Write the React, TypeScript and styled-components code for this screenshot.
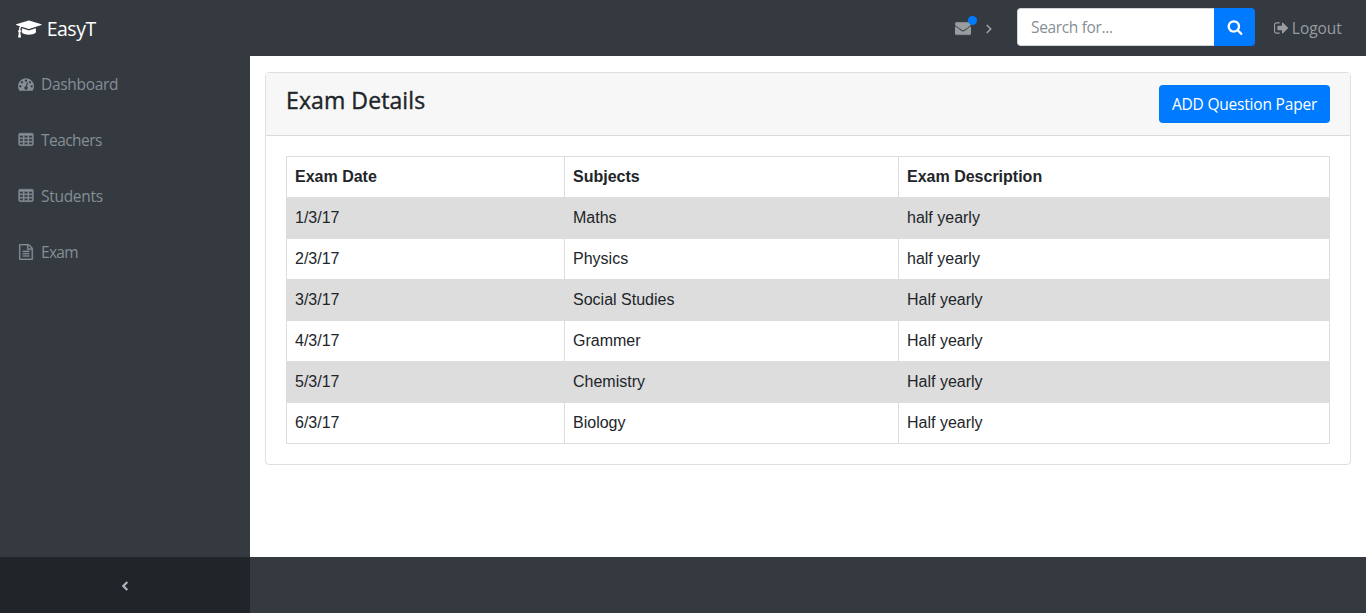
import React from "react";
import styled, { createGlobalStyle } from "styled-components";

const GlobalStyle = createGlobalStyle`
  *, *::before, *::after { box-sizing: border-box; }
  body {
    margin: 0;
    font-family: "Open Sans", "Noto Sans", sans-serif;
    font-size: 15.5px;
    line-height: 24px;
    color: #212529;
    background: #343a40;
  }
`;

const Page = styled.div`
  display: grid;
  grid-template-columns: 250px 1fr;
  grid-template-rows: 56px 1fr;
  height: 100vh;
  overflow: hidden;
`;

const Navbar = styled.header`
  grid-column: 1 / -1;
  display: flex;
  align-items: center;
  padding: 0 24px 0 16px;
  background: #343a40;
`;

const Label = styled.span<{ $size?: number; $spacing?: number }>`
  display: block;
  font-size: ${(p) => p.$size ?? 15.5}px;
  letter-spacing: ${(p) => p.$spacing ?? -0.3}px;
  white-space: nowrap;
`;

const Brand = styled.a`
  display: flex;
  align-items: center;
  gap: 5px;
  margin-right: auto;
  padding-top: 2px;
  color: #fff;
`;

const Messages = styled.a`
  display: flex;
  align-items: center;
  position: relative;
  width: 39px;
  margin: 0 23px 0 0;
  color: #9a9da0;
`;

const UnreadDot = styled.span`
  position: absolute;
  left: 13px;
  top: -4px;
  width: 9px;
  height: 9px;
  border-radius: 50%;
  background: #007bff;
`;

const Caret = styled.span`
  display: flex;
  margin: 1px 0 0 14px;
`;

const SearchGroup = styled.form`
  display: flex;
  width: 238px;
  height: 38px;
  margin: -2px 18px 0 0;
`;

const SearchInput = styled.input`
  flex: 1;
  min-width: 0;
  padding: 0 12px 0 13px;
  border: 1px solid #ced4da;
  border-right: 0;
  border-radius: 4px 0 0 4px;
  font: inherit;
  letter-spacing: -0.35px;
  background: #fff;
  outline: 0;
  &::placeholder { color: #868e96; opacity: 1; }
`;

const SearchButton = styled.button`
  display: flex;
  align-items: center;
  justify-content: center;
  width: 41px;
  padding: 0;
  border: 0;
  border-radius: 0 4px 4px 0;
  color: #fff;
  background: #007bff;
`;

const Logout = styled.a`
  display: flex;
  align-items: center;
  gap: 3px;
  width: 69px;
  padding-left: 1px;
  color: #9a9da0;
`;

const Sidebar = styled.nav`
  display: flex;
  flex-direction: column;
  background: #343a40;
`;

const NavItem = styled.a`
  display: flex;
  align-items: center;
  gap: 5px;
  height: 56px;
  padding: 0 16px;
  color: #868e96;
`;

const IconSlot = styled.span`
  display: flex;
  justify-content: center;
  width: 20px;
`;

const SidebarToggle = styled.button`
  display: flex;
  align-items: center;
  justify-content: center;
  height: 56px;
  margin-top: auto;
  padding: 2px 0 0;
  border: 0;
  color: #adb5bd;
  background: #212529;
`;

const Content = styled.div`
  display: flex;
  flex-direction: column;
  background: #fff;
`;

const Main = styled.main`
  flex: 1;
  padding: 16px 15px 0;
`;

const Footer = styled.footer`
  height: 56px;
  background: #343a40;
`;

const Card = styled.section`
  border: 1px solid #dfdfdf;
  border-radius: 4px;
`;

const CardHeader = styled.div`
  display: flex;
  justify-content: space-between;
  align-items: flex-start;
  padding: 12px 20px;
  border-bottom: 1px solid #dadada;
  border-radius: 3px 3px 0 0;
  background: #f7f7f7;
`;

const CardTitle = styled.h4`
  margin: 0;
  font-size: 23px;
  font-weight: 500;
  line-height: 31px;
  letter-spacing: 0.1px;
  -webkit-text-stroke: 0.4px currentColor;
`;

const AddButton = styled.button`
  display: flex;
  align-items: center;
  justify-content: center;
  width: 171px;
  height: 38px;
  padding: 0;
  border: 0;
  border-radius: 4px;
  font: inherit;
  color: #fff;
  background: #007bff;
`;

const CardBody = styled.div`
  padding: 20px;
`;

const Table = styled.table`
  width: 100%;
  table-layout: fixed;
  border-collapse: collapse;
  font: 16px/24px "Liberation Sans", Arial, sans-serif;
  border: 1px solid #ddd;
`;

const Cell = styled.td`
  height: 41px;
  padding: 8px;
  border-left: 1px solid #ddd;
  border-bottom: 1px solid #ddd;
  text-align: left;
`;

const Row = styled.tr<{ $striped?: boolean }>`
  background: ${(p) => (p.$striped ? "#ddd" : "#fff")};
`;

type Glyph = { w: number; d: string; bold?: number };

const cell = (x: number, y: number) =>
  `M${x} ${y}v-192q0-14-9-23t-23-9h-320q-14 0-23 9t-9 23v192q0 14 9 23t23 9h320q14 0 23-9t9-23z`;

const glyphs: Record<string, Glyph> = {
  cap: {
    w: 2304,
    d: "M1774 836l18 316q4 69-82 128t-235 93.5-323 34.5-323-34.5-235-93.5-82-128l18-316 574 181q22 7 48 7t48-7zm530-324q0 23-22 31l-1120 352q-4 1-10 1t-10-1l-652-206q-43 34-71 111.5t-34 178.5q63 36 63 109 0 69-58 107l58 433q2 14-8 25-9 11-24 11h-192q-15 0-24-11-10-11-8-25l58-433q-58-38-58-107 0-73 65-111 11-207 98-330l-333-104q-22-8-22-31t22-31l1120-352q4-1 10-1t10 1l1120 352q22 8 22 31z",
  },
  dashboard: {
    w: 1792,
    d: "M384 1152q0-53-37.5-90.5t-90.5-37.5-90.5 37.5-37.5 90.5 37.5 90.5 90.5 37.5 90.5-37.5 37.5-90.5zm192-448q0-53-37.5-90.5t-90.5-37.5-90.5 37.5-37.5 90.5 37.5 90.5 90.5 37.5 90.5-37.5 37.5-90.5zm428 481l101-382q6-26-7.5-48.5t-38.5-29.5-48 6.5-30 39.5l-101 382q-60 5-107 43.5t-63 98.5q-20 77 20 146t117 89 146-20 89-117q16-60-6-117t-72-91zm660-33q0-53-37.5-90.5t-90.5-37.5-90.5 37.5-37.5 90.5 37.5 90.5 90.5 37.5 90.5-37.5 37.5-90.5zm-640-640q0-53-37.5-90.5t-90.5-37.5-90.5 37.5-37.5 90.5 37.5 90.5 90.5 37.5 90.5-37.5 37.5-90.5zm448 192q0-53-37.5-90.5t-90.5-37.5-90.5 37.5-37.5 90.5 37.5 90.5 90.5 37.5 90.5-37.5 37.5-90.5zm320 448q0 261-141 483-19 29-54 29h-1402q-35 0-54-29-141-221-141-483 0-182 71-348t191-286 286-191 348-71 348 71 286 191 191 286 71 348z",
  },
  table: {
    w: 1792,
    bold: 45,
    d:
      [576, 1088, 1600].map((x) => [608, 992, 1376].map((y) => cell(x, y)).join("")).join("") +
      "M1728 288v1088q0 66-47 113t-113 47h-1344q-66 0-113-47t-47-113v-1088q0-66 47-113t113-47h1344q66 0 113 47t47 113z",
  },
  file: {
    w: 1792,
    bold: 30,
    d: "M1596 380q28 28 48 76t20 88v1152q0 40-28 68t-68 28h-1344q-40 0-68-28t-28-68v-1600q0-40 28-68t68-28h896q40 0 88 20t76 48zm-444-244v376h376q-10-29-22-41l-313-313q-12-12-41-22zm384 1528v-1024h-416q-40 0-68-28t-28-68v-416h-768v1536h1280zm-1024-864q0-14 9-23t23-9h704q14 0 23 9t9 23v64q0 14-9 23t-23 9h-704q-14 0-23-9t-9-23v-64zm736 224q14 0 23 9t9 23v64q0 14-9 23t-23 9h-704q-14 0-23-9t-9-23v-64q0-14 9-23t23-9h704zm0 256q14 0 23 9t9 23v64q0 14-9 23t-23 9h-704q-14 0-23-9t-9-23v-64q0-14 9-23t23-9h704z",
  },
  envelope: {
    w: 1792,
    bold: 30,
    d: "M1792 710v794q0 66-47 113t-113 47h-1472q-66 0-113-47t-47-113v-794q44 49 101 87 362 246 497 345 57 42 92.5 65.5t94.5 48 110 24.5h2q51 0 110-24.5t94.5-48 92.5-65.5q170-123 498-345 57-39 100-87zm0-294q0 79-49 151t-122 123q-376 261-468 325-10 7-42.5 31t-54 38.5-52 32.5-57.5 27-50 9h-2q-23 0-50-9t-57.5-27-52-32.5-54-38.5-42.5-31q-91-64-262-182.5t-205-142.5q-62-42-117-115.5t-55-136.5q0-78 41.5-130t118.5-52h1472q65 0 112.5 47t47.5 113z",
  },
  search: {
    w: 1792,
    d: "M1216 832q0-185-131.5-316.5t-316.5-131.5-316.5 131.5-131.5 316.5 131.5 316.5 316.5 131.5 316.5-131.5 131.5-316.5zm512 832q0 52-38 90t-90 38q-54 0-90-38l-343-342q-179 124-399 124-143 0-273.5-55.5t-225-150-150-225-55.5-273.5 55.5-273.5 150-225 225-150 273.5-55.5 273.5 55.5 225 150 150 225 55.5 273.5q0 220-124 399l343 343q37 37 37 90z",
  },
  signOut: {
    w: 1664,
    d: "M640 1440q0 4 1 20t.5 26.5-3 23.5-10 19.5-20.5 6.5h-320q-119 0-203.5-84.5t-84.5-203.5v-704q0-119 84.5-203.5t203.5-84.5h320q13 0 22.5 9.5t9.5 22.5q0 4 1 20t.5 26.5-3 23.5-10 19.5-20.5 6.5h-320q-66 0-113 47t-47 113v704q0 66 47 113t113 47h312l11.5 1 11.5 3 8 5.5 7 9 2 13.5zM1568 896q0 26-19 45l-544 544q-19 19-45 19t-45-19-19-45v-288h-448q-26 0-45-19t-19-45v-384q0-26 19-45t45-19h448v-288q0-26 19-45t45-19 45 19l544 544q19 19 19 45z",
  },
};

function Icon({ name, size = 16 }: { name: string; size?: number }) {
  const g = glyphs[name];
  return (
    <svg width={(g.w * size) / 1792} height={size} viewBox={`0 0 ${g.w} 1792`} fill="currentColor" fillRule="evenodd">
      <path d={g.d} stroke="currentColor" strokeWidth={g.bold ?? 0} />
    </svg>
  );
}

function Angle({ left, weight }: { left?: boolean; weight: number }) {
  return (
    <svg width="8" height="12" viewBox="0 0 8 12" fill="none" stroke="currentColor" strokeWidth={weight}>
      <path d={left ? "M6.3 2L2.3 6l4 4" : "M1.7 2l4 4-4 4"} />
    </svg>
  );
}

const links = [
  { icon: "dashboard", label: "Dashboard", spacing: -0.3 },
  { icon: "table", label: "Teachers", spacing: -0.55 },
  { icon: "table", label: "Students", spacing: -0.3 },
  { icon: "file", label: "Exam", spacing: -0.7 },
];

const exams = [
  ["1/3/17", "Maths", "half yearly"],
  ["2/3/17", "Physics", "half yearly"],
  ["3/3/17", "Social Studies", "Half yearly"],
  ["4/3/17", "Grammer", "Half yearly"],
  ["5/3/17", "Chemistry", "Half yearly"],
  ["6/3/17", "Biology", "Half yearly"],
];

export default function App() {
  return (
    <Page>
      <GlobalStyle />
      <Navbar>
        <Brand>
          <Icon name="cap" size={20} />
          <Label $size={19.5} $spacing={-0.5}>EasyT</Label>
        </Brand>
        <Messages>
          <Icon name="envelope" />
          <UnreadDot />
          <Caret>
            <Angle weight={1.7} />
          </Caret>
        </Messages>
        <SearchGroup>
          <SearchInput placeholder="Search for..." />
          <SearchButton type="button">
            <Icon name="search" />
          </SearchButton>
        </SearchGroup>
        <Logout>
          <Icon name="signOut" />
          <Label $spacing={-0.05}>Logout</Label>
        </Logout>
      </Navbar>
      <Sidebar>
        {links.map((l) => (
          <NavItem key={l.label}>
            <IconSlot>
              <Icon name={l.icon} />
            </IconSlot>
            <Label $spacing={l.spacing}>{l.label}</Label>
          </NavItem>
        ))}
        <SidebarToggle type="button">
          <Angle left weight={2.2} />
        </SidebarToggle>
      </Sidebar>
      <Content>
        <Main>
          <Card>
            <CardHeader>
              <CardTitle>Exam Details</CardTitle>
              <AddButton type="button">
                <Label $spacing={-0.2}>ADD Question Paper</Label>
              </AddButton>
            </CardHeader>
            <CardBody>
              <Table>
                <colgroup>
                  <col width="278" />
                  <col width="334" />
                  <col />
                </colgroup>
                <thead>
                  <Row>
                    <Cell as="th">Exam Date</Cell>
                    <Cell as="th">Subjects</Cell>
                    <Cell as="th">Exam Description</Cell>
                  </Row>
                </thead>
                <tbody>
                  {exams.map((row, i) => (
                    <Row key={row[0]} $striped={i % 2 === 0}>
                      {row.map((value) => (
                        <Cell key={value}>{value}</Cell>
                      ))}
                    </Row>
                  ))}
                </tbody>
              </Table>
            </CardBody>
          </Card>
        </Main>
        <Footer />
      </Content>
    </Page>
  );
}
